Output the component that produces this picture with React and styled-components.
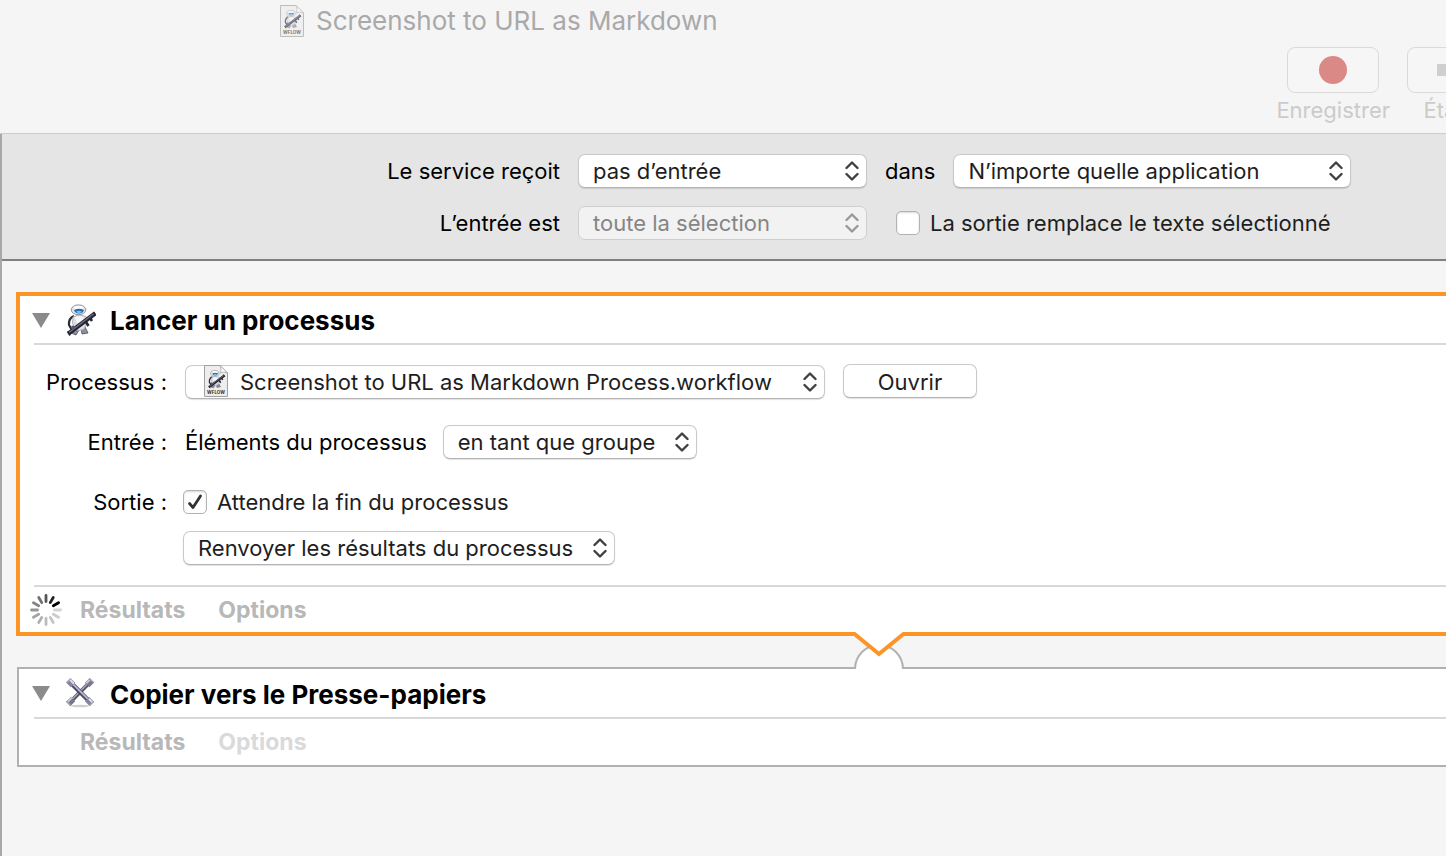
import React from "react";
import styled, { createGlobalStyle } from "styled-components";

const Global = createGlobalStyle`
  * { box-sizing: border-box; }
  body {
    margin: 0;
    background: #f5f5f5;
    color: #000;
    font: 22px/26px Inter, "Liberation Sans", sans-serif;
    overflow-x: hidden;
  }
  button, select, input { font: inherit; margin: 0; }
`;

const Window = styled.div`
  display: flex;
  flex-direction: column;
  min-height: 100vh;
`;

const TitleBar = styled.header`
  height: 134px;
  border-bottom: 1px solid #cdcdcd;
  overflow: hidden;
`;

const DocumentTitle = styled.h1`
  display: flex;
  align-items: center;
  gap: 12px;
  height: 42px;
  margin: 0;
  padding-left: 280px;
  font-size: 26px;
  line-height: 32px;
  font-weight: 400;
  color: #a9a9a9;
`;

const Toolbar = styled.div`
  display: flex;
  justify-content: flex-end;
  gap: 17px;
  padding-top: 5px;
  margin-right: -53px;
`;

const ToolItem = styled.label`
  display: flex;
  flex-direction: column;
  align-items: center;
  gap: 4px;
  color: #cbcbcb;
`;

const ToolButton = styled.button`
  display: flex;
  align-items: center;
  justify-content: center;
  width: 92px;
  height: 46px;
  padding: 0;
  border: 1px solid #dadada;
  border-radius: 8px;
  background: #f6f6f6;
`;

const Workspace = styled.main`
  flex: 1;
  border-left: 2px solid #a8a8a8;
`;

const Settings = styled.section`
  display: flex;
  flex-direction: column;
  gap: 18px;
  padding: 20px 0 19px;
  background: #e5e5e5;
  border-bottom: 2px solid #808080;
`;

const Row = styled.div`
  display: flex;
  align-items: center;
  gap: ${(p) => p.$gap || 18}px;
  height: 34px;
  white-space: nowrap;
`;

const SettingLabel = styled.label`
  flex: 0 0 558px;
  text-align: right;
`;

const FieldLabel = styled.label`
  flex: 0 0 147px;
  text-align: right;
`;

const SelectBox = styled.div`
  position: relative;
  flex: 0 0 ${(p) => p.$width}px;
  height: 34px;
  color: ${(p) => (p.$muted ? "#858585" : "#1e1e1e")};
`;

const SelectControl = styled.select`
  appearance: none;
  width: 100%;
  height: 34px;
  padding: 0 36px 0 ${(p) => (p.$withIcon ? 54 : 14)}px;
  border: 1px solid #c9c9c9;
  border-bottom-color: #b4b4b4;
  border-radius: 7px;
  background: #fff;
  color: inherit;
  box-shadow: 0 1px 1px rgba(0, 0, 0, 0.12);
  &:disabled {
    opacity: 1;
    background: #f2f2f2;
    border-color: #cfcfcf;
    box-shadow: none;
  }
`;

const Chevrons = styled.svg`
  position: absolute;
  right: 8px;
  top: 7px;
  pointer-events: none;
`;

const SelectIcon = styled.span`
  position: absolute;
  left: 19px;
  top: 0;
  height: 32px;
  pointer-events: none;
`;

const CheckLabel = styled.label`
  display: flex;
  align-items: center;
  gap: 10px;
  color: #1e1e1e;
  margin-left: ${(p) => p.$inset || 0}px;
`;

const CheckBoxWrap = styled.span`
  position: relative;
  width: 24px;
  height: 24px;
`;

const CheckInput = styled.input`
  appearance: none;
  display: block;
  width: 24px;
  height: 24px;
  border: 1px solid #b2b2b2;
  border-radius: 5px;
  background: #fff;
  box-shadow: inset 0 1px 2px rgba(0, 0, 0, 0.16);
  & + svg { display: none; }
  &:checked + svg { display: block; }
`;

const CheckMark = styled.svg`
  position: absolute;
  left: 0;
  top: 0;
  pointer-events: none;
`;

const PushButton = styled.button`
  width: 134px;
  height: 34px;
  margin-bottom: 2px;
  padding: 1px 0 0;
  border: 1px solid #c9c9c9;
  border-bottom-color: #b4b4b4;
  border-radius: 7px;
  background: #fff;
  color: #1e1e1e;
  box-shadow: 0 1px 1px rgba(0, 0, 0, 0.12);
`;

const Actions = styled.section`
  padding: 31px 0 40px 14px;
`;

const Card = styled.article`
  background: #fff;
  border: ${(p) => (p.$active ? "4px solid #fd9426" : "2px solid #b1b1b1")};
  border-right: 0;
  margin-left: ${(p) => (p.$active ? 0 : 1)}px;
  padding-left: ${(p) => (p.$active ? 0 : 1)}px;
`;

const CardHeader = styled.div`
  display: flex;
  align-items: center;
  height: ${(p) => (p.$active ? 47 : 48)}px;
  padding-left: 12px;
`;

const Disclosure = styled.button`
  display: flex;
  padding: 0;
  margin-right: 14px;
  border: 0;
  background: none;
`;

const CardTitle = styled.h2`
  margin: 0 0 0 14px;
  padding-top: 3px;
  font-size: 26px;
  line-height: 32px;
  font-weight: 700;
  white-space: nowrap;
`;

const Rule = styled.hr`
  height: 2px;
  margin: 0 0 0 14px;
  border: 0;
  background: #d8d8d8;
`;

const Fields = styled.div`
  display: flex;
  flex-direction: column;
  gap: 26px;
  padding: 20px 0;
`;

const FieldGroup = styled.div`
  display: flex;
  flex-direction: column;
  gap: 12px;
`;

const CardFooter = styled.div`
  display: flex;
  align-items: center;
  height: ${(p) => (p.$active ? 45 : 46)}px;
  padding-left: 10px;
`;

const StatusSlot = styled.span`
  display: flex;
  width: 50px;
  height: 32px;
`;

const FooterButton = styled.button`
  padding: 0;
  margin-right: 33px;
  border: 0;
  background: none;
  font-size: 23px;
  font-weight: 700;
  color: ${(p) => (p.$faint ? "#dadada" : "#b8b8b8")};
`;

const Connector = styled.div`
  position: relative;
  height: 31px;
`;

const ConnectorShape = styled.svg`
  position: absolute;
  left: 834px;
  top: -4px;
  z-index: 1;
`;

const Robot = () => (
  <>
    <path d="M10 12Q4.500 14 5 21L8 26" fill="none" stroke="#2a2b38" strokeWidth="2.200" />
    <path d="M11 24l-4 5 5 2 3-5ZM17 24l1 6 6-1-3-6Z" fill="#8d8f9c" stroke="#4b4d5a" strokeWidth=".8" />
    <path d="M9 13Q16 9 22.500 13Q24 20 20 25Q15 28 11 25Q7 19 9 13Z" fill="#dfdfe5" stroke="#a5a6b0" strokeWidth=".8" />
    <path d="M11 13.500Q16 11 20 14Q18 19 13 19Z" fill="#f8f8fb" />
    <ellipse cx="14.500" cy="5.800" rx="7.300" ry="4.900" fill="#e4e4e8" stroke="#85868f" strokeWidth=".9" />
    <ellipse cx="14.500" cy="3.400" rx="4.800" ry="1.600" fill="#fff" />
    <path d="M10 6.200Q15 3.500 20 6.200Q18.500 9.500 15 9.500T10 6.200Z" fill="#2369ae" />
    <path d="M12 7.500Q15 5.800 18 7.500Q16.500 9.200 15 9.200T12 7.500Z" fill="#69c5ff" />
    <path d="M22 18l2.500 4M26 14l2 3" stroke="#262736" strokeWidth="2.600" />
    <path d="M4.500 29.500L31 9.500" stroke="#252634" strokeWidth="4.200" />
    <path d="M5 28.500L30 9.500" stroke="#70738a" strokeWidth="1.100" />
    <path d="M3.500 27.500l2.500 4M29.500 8l2 3" stroke="#252634" strokeWidth="1.600" />
    <circle cx="9" cy="23.500" r="1.900" fill="#55586b" />
  </>
);

const AutomatorIcon = () => (
  <svg width="32" height="32" viewBox="0 0 32 32" aria-hidden="true">
    <Robot />
  </svg>
);

const WorkflowIcon = ({ faded }) => (
  <svg width="24" height="32" viewBox="0 0 24 32" opacity={faded ? 0.65 : 1} aria-hidden="true">
    <path d="M.5.500H16L23.500 8V31.500H.500Z" fill="#ededed" stroke="#a0a0a0" />
    <path d="M16 .500L23.500 8Q19 6 16.500 8Q18 4 16 .500Z" fill="#fff" stroke="#a8a8a8" strokeWidth=".8" />
    <g transform="translate(2.500 5) scale(.58)">
      <Robot />
    </g>
    <text x="12" y="28.500" textAnchor="middle" fontFamily="Inter, sans-serif" fontSize="4.500" fontWeight="700" fill="#333">WFLOW</text>
  </svg>
);

const WrenchIcon = () => (
  <svg width="32" height="32" viewBox="0 0 32 32" aria-hidden="true">
    <ellipse cx="16" cy="29" rx="9" ry="1.300" fill="#cfcfcf" />
    <g transform="translate(2 1) scale(.88)">
      <path d="M5 27L27 5" stroke="#55566a" strokeWidth="4.400" />
      <path d="M5 26L26 5" stroke="#a6a5bd" strokeWidth="1.600" />
      <path d="M2.500 29.500l5.500-5.500M24 8l5.500-5.500" stroke="#77778a" strokeWidth="7" />
      <path d="M2 27l5-5M23 6l4-4" stroke="#c6c6d2" strokeWidth="2.400" />
      <path d="M5 5l22 22" stroke="#4b4a62" strokeWidth="5" />
      <path d="M6 5l21 21" stroke="#bbb9dc" strokeWidth="2" />
      <path d="M2.500 2.500L8 8M24 24l5.500 5.500" stroke="#858499" strokeWidth="7" />
      <path d="M4 1.500L9 6.500M26 23.500l4 4" stroke="#dcdcec" strokeWidth="2.400" />
      <path d="M1 5L5 1M27 31l4-4M27 1l4 4M1 27l4 4" stroke="#a9a8c2" strokeWidth="1.500" />
    </g>
  </svg>
);

const SPOKES = ["#d4d4d4", "#cccccc", "#c4c4c4", "#bcbcbc", "#b0b0b0", "#a4a4a4", "#969696", "#858585", "#707070", "#555555", "#222222", "#000000"];

const Spinner = () => (
  <svg width="32" height="32" viewBox="0 0 32 32" role="img" aria-label="En cours">
    {SPOKES.map((color, i) => (
      <path key={i} d="M24.500 16H30.500" stroke={color} strokeWidth="2.800" strokeLinecap="round" transform={`rotate(${i * 30} 16 16)`} />
    ))}
  </svg>
);

const Select = ({ id, width, disabled, icon, children }) => (
  <SelectBox $width={width} $muted={disabled}>
    <SelectControl id={id} disabled={disabled} $withIcon={!!icon}>
      <option>{children}</option>
    </SelectControl>
    {icon && <SelectIcon>{icon}</SelectIcon>}
    <Chevrons width="14" height="20" viewBox="0 0 14 20" fill="none" stroke={disabled ? "#999" : "#404040"} strokeWidth="2.400" strokeLinecap="round" strokeLinejoin="round">
      <path d="M1.500 7L7 1.500L12.500 7M1.500 13L7 18.500L12.500 13" />
    </Chevrons>
  </SelectBox>
);

const Checkbox = ({ checked, inset, children }) => (
  <CheckLabel $inset={inset}>
    <CheckBoxWrap>
      <CheckInput type="checkbox" defaultChecked={checked} />
      <CheckMark width="24" height="24" viewBox="0 0 24 24" fill="none" stroke="#333" strokeWidth="2.800" strokeLinecap="round" strokeLinejoin="round">
        <path d="M6.500 13.500L10 17.500L17.500 6" />
      </CheckMark>
    </CheckBoxWrap>
    {children}
  </CheckLabel>
);

const ActionHeader = ({ icon, active, children }) => (
  <>
    <CardHeader $active={active}>
      <Disclosure aria-label="Afficher ou masquer">
        <svg width="18" height="18" viewBox="0 0 18 18"><path d="M0 2H18L9 17Z" fill="#8b8b8b" /></svg>
      </Disclosure>
      {icon}
      <CardTitle>{children}</CardTitle>
    </CardHeader>
    <Rule />
  </>
);

export default function App() {
  return (
    <>
      <Global />
      <Window>
        <TitleBar>
          <DocumentTitle>
            <WorkflowIcon faded />
            Screenshot to URL as Markdown
          </DocumentTitle>
          <Toolbar>
            <ToolItem>
              <ToolButton>
                <svg width="28" height="28" viewBox="0 0 28 28"><circle cx="14" cy="14" r="14" fill="#da8987" /></svg>
              </ToolButton>
              Enregistrer
            </ToolItem>
            <ToolItem>
              <ToolButton>
                <svg width="32" height="12" viewBox="0 0 32 12"><path d="M0 0H12V12H0ZM16 0L32 6L16 12Z" fill="#cfcfcf" /></svg>
              </ToolButton>
              Étape
            </ToolItem>
          </Toolbar>
        </TitleBar>

        <Workspace>
          <Settings>
            <Row>
              <SettingLabel htmlFor="receives">Le service reçoit</SettingLabel>
              <Select id="receives" width={289}>pas d’entrée</Select>
              <label htmlFor="application">dans</label>
              <Select id="application" width={398}>N’importe quelle application</Select>
            </Row>
            <Row>
              <SettingLabel htmlFor="input-kind">L’entrée est</SettingLabel>
              <Select id="input-kind" width={289} disabled>toute la sélection</Select>
              <Checkbox inset={11}>La sortie remplace le texte sélectionné</Checkbox>
            </Row>
          </Settings>

          <Actions>
            <Card $active>
              <ActionHeader active icon={<AutomatorIcon />}>Lancer un processus</ActionHeader>
              <Fields>
                <Row>
                  <FieldLabel htmlFor="process">Processus :</FieldLabel>
                  <Select id="process" width={640} icon={<WorkflowIcon />}>
                    Screenshot to URL as Markdown Process.workflow
                  </Select>
                  <PushButton>Ouvrir</PushButton>
                </Row>
                <Row>
                  <FieldLabel htmlFor="grouping">Entrée :</FieldLabel>
                  <Row as="span" $gap={16}>
                    Éléments du processus
                    <Select id="grouping" width={254}>en tant que groupe</Select>
                  </Row>
                </Row>
                <FieldGroup>
                  <Row $gap={16}>
                    <FieldLabel htmlFor="result">Sortie :</FieldLabel>
                    <Checkbox checked>Attendre la fin du processus</Checkbox>
                  </Row>
                  <Row $gap={16}>
                    <FieldLabel as="span" />
                    <Select id="result" width={432}>Renvoyer les résultats du processus</Select>
                  </Row>
                </FieldGroup>
              </Fields>
              <Rule />
              <CardFooter $active>
                <StatusSlot><Spinner /></StatusSlot>
                <FooterButton>Résultats</FooterButton>
                <FooterButton>Options</FooterButton>
              </CardFooter>
            </Card>

            <Connector>
              <ConnectorShape width="58" height="39" viewBox="0 0 58 39" aria-hidden="true">
                <path d="M5 39V36A24 24 0 0 1 53 36V39Z" fill="#fff" />
                <path d="M5 37A24 24 0 0 1 53 37" fill="none" stroke="#b1b1b1" strokeWidth="2" />
                <path d="M4 0H54V2L29 22.500L4 2Z" fill="#fff" />
                <path d="M3 2H4.500L29 22L53.500 2H55" fill="none" stroke="#fd9426" strokeWidth="4" />
              </ConnectorShape>
            </Connector>

            <Card>
              <ActionHeader icon={<WrenchIcon />}>Copier vers le Presse-papiers</ActionHeader>
              <CardFooter>
                <StatusSlot />
                <FooterButton>Résultats</FooterButton>
                <FooterButton $faint>Options</FooterButton>
              </CardFooter>
            </Card>
          </Actions>
        </Workspace>
      </Window>
    </>
  );
}
